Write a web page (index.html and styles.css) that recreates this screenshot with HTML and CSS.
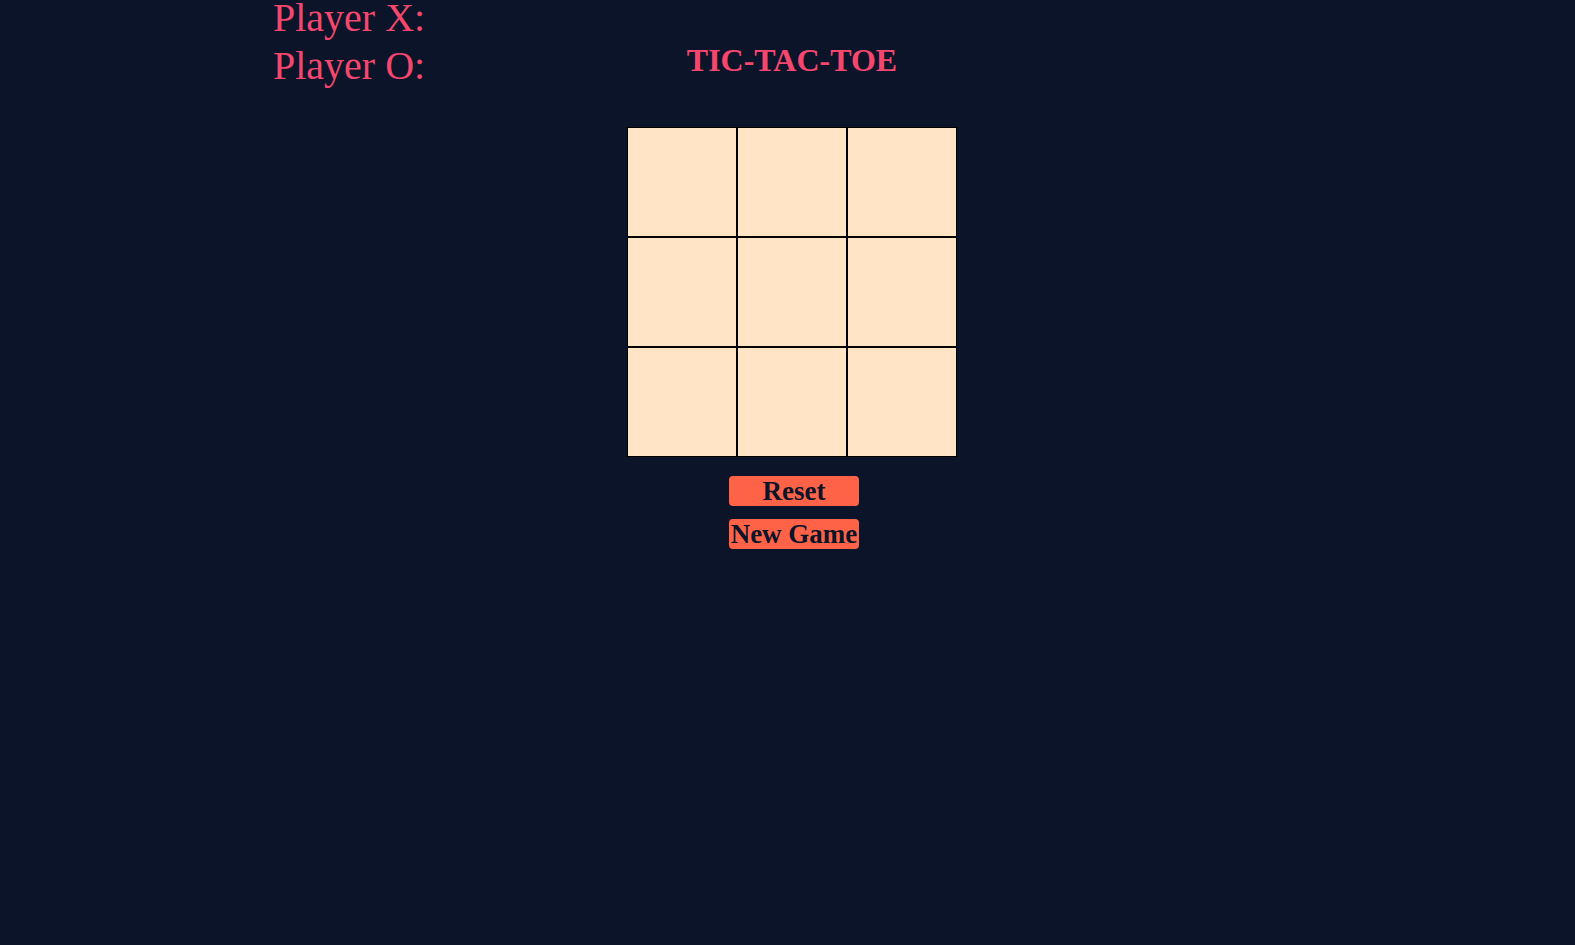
FILE: index.html
```html
<!DOCTYPE html>
<html lang="en">
<head>
<meta charset="utf-8">
<title>Tic-Tac-Toe</title>
<link rel="stylesheet" href="styles.css">
</head>
<body>
<div class="app">
  <div class="top">
    <div class="scores">
      <div class="score">Player X:</div>
      <div class="score">Player O:</div>
    </div>
    <h1 class="title">TIC-TAC-TOE</h1>
    <div class="spacer"></div>
  </div>
  <div class="board">
    <div class="cell"></div><div class="cell"></div><div class="cell"></div>
    <div class="cell"></div><div class="cell"></div><div class="cell"></div>
    <div class="cell"></div><div class="cell"></div><div class="cell"></div>
  </div>
  <div class="controls">
    <button class="btn">Reset</button>
    <button class="btn">New Game</button>
  </div>
</div>
</body>
</html>
```

FILE: styles.css
```css
html, body {
  margin: 0;
  padding: 0;
  height: 100%;
}
body {
  background: #0b1429;
  font-family: "Liberation Serif", "Times New Roman", serif;
  overflow: hidden;
}
.app {
  padding-left: 9px;
  display: flex;
  flex-direction: column;
  align-items: center;
}
.top {
  width: 100%;
  height: 88px;
  display: grid;
  grid-template-columns: 1fr auto 1fr;
  align-items: start;
}
.scores {
  padding-left: 264px;
  margin-top: -6.5px;
  color: #f5476e;
  font-size: 40px;
  line-height: 48px;
}
.title {
  margin: 41.5px 0 0;
  color: #f5476e;
  font-size: 32px;
  font-weight: bold;
  line-height: normal;
}
.board {
  margin-top: 39px;
  display: grid;
  grid-template-columns: repeat(3, 110px);
  grid-template-rows: repeat(3, 110px);
}
.cell {
  box-sizing: border-box;
  background: #ffe5c5;
  border: 1px solid #000;
}
.controls {
  margin-top: 19px;
  margin-left: 4px;
  display: flex;
  flex-direction: column;
  gap: 13px;
}
.btn {
  width: 130px;
  height: 30px;
  padding: 0;
  border: none;
  border-radius: 4px;
  background: #ff6347;
  color: #0b1429;
  font-family: "Liberation Serif", "Times New Roman", serif;
  font-size: 27px;
  font-weight: bold;
  line-height: 30px;
  white-space: nowrap;
}
```
